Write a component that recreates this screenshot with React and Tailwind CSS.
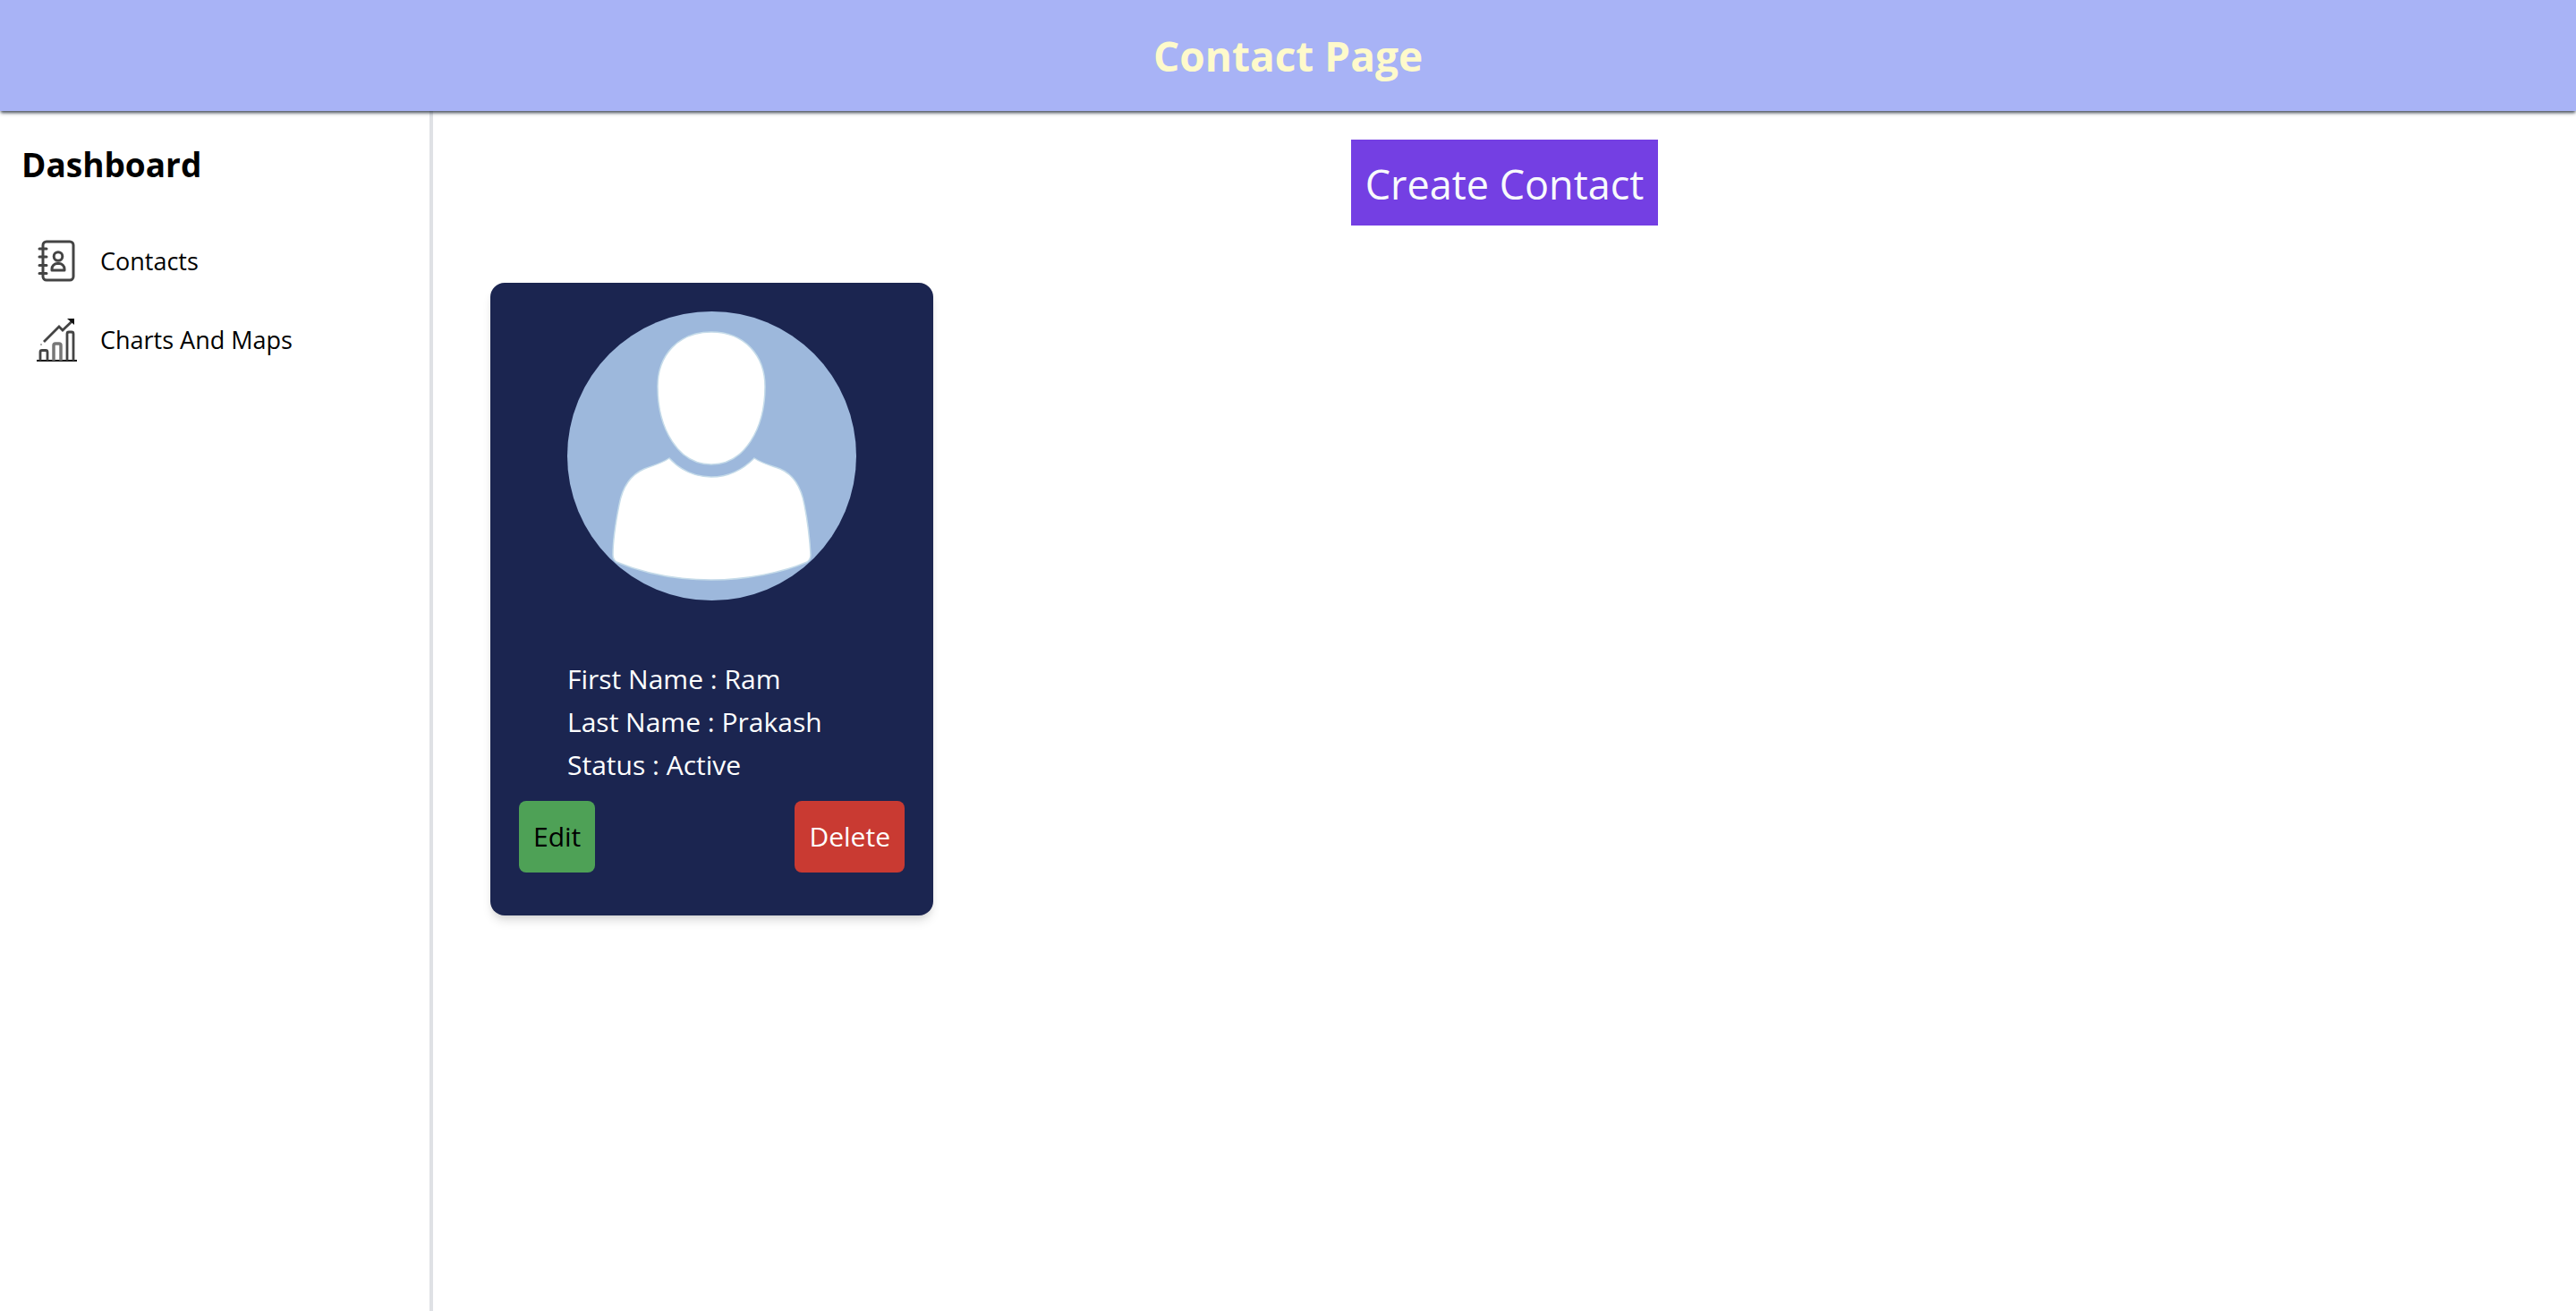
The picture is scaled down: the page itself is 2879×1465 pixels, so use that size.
const person = { first: "Ram", last: "Prakash", status: "Active" };

function ContactsIcon() {
  return (
    <svg className="size-12" viewBox="0 0 48 48" fill="none" stroke="#444" strokeWidth="3" strokeLinecap="round" aria-hidden="true">
      <rect x="8" y="2" width="34" height="43" rx="4" />
      <path d="M4 10h8M4 19h8M4 28.500h8M4 37.500h8" />
      <circle cx="25" cy="18.500" r="4.800" />
      <path d="M18 34v-1.500a6 6 0 0 1 6-6h2a6 6 0 0 1 6 6v1.500z" strokeLinejoin="round" />
    </svg>
  );
}

function ChartsIcon() {
  return (
    <svg className="size-12" viewBox="0 0 48 48" fill="none" stroke="#444" strokeWidth="2.800" aria-hidden="true">
      <path d="M1 47h45" stroke="#111" strokeWidth="2" />
      <path d="M5 47V37.500q0-2 2-2h4q2 0 2 2V47M35 47V17q0-2 2-2h3q2 0 2 2V47" />
      <path d="M20 47V30q0-2 2-2h4q2 0 2 2V47" stroke="#777" strokeWidth="3.500" />
      <path d="M9 26 26 9l4 4L41 2.500" />
      <path d="M35 0h8v7z" fill="#111" stroke="none" />
      <circle cx="6" cy="29" r="1" fill="#999" stroke="none" />
    </svg>
  );
}

function Avatar() {
  return (
    <svg className="size-[323px] rounded-full" viewBox="0 0 323 323" role="img" aria-label="Contact photo">
      <rect width="323" height="323" fill="#9db8dc" />
      <g fill="#fff" stroke="#c5dbe9" strokeWidth="1.500">
        <path d="M161 23C198 23 221 49 221 84C221 131 198 171 161 171C124 171 101 131 101 84C101 49 124 23 161 23Z" />
        <path d="M114 164C127 178 142 185 161 185C180 185 195 178 209 164C218 170 227 172 238 176C252 182 261 194 265 216C269 236 271 255 272 272Q272 277 268 280C240 292 200 300 161 300C122 300 84 292 55 280Q51 277 51 272C51 255 54 236 58 216C62 194 72 182 86 176C96 172 105 170 114 164Z" />
      </g>
    </svg>
  );
}

function NavLink({ icon, children }) {
  return (
    <a href="#" className="flex h-[88px] items-center gap-6 pl-4 text-[27px] leading-10">
      {icon}
      <span>{children}</span>
    </a>
  );
}

export default function App() {
  return (
    <div className="flex min-h-screen flex-col bg-white font-['Open_Sans',sans-serif] text-black">
      <header className="relative flex h-[124px] items-center justify-center bg-[#a8b3f6] shadow-[0_3px_3px_-1px_rgba(31,41,55,0.7),0_3px_5px_-1px_rgba(31,41,55,0.3)]">
        <h1 className="text-[46px] leading-[64px] font-bold text-[#fefacb]">Contact Page</h1>
      </header>
      <div className="flex grow">
        <aside className="w-[484px] shrink-0 border-r-4 border-[#dfe1e5] px-6 pt-8">
          <h2 className="text-[37px] leading-[56px] font-bold">Dashboard</h2>
          <nav className="mt-9">
            <NavLink icon={<ContactsIcon />}>Contacts</NavLink>
            <NavLink icon={<ChartsIcon />}>Charts And Maps</NavLink>
          </nav>
        </aside>
        <main className="grow px-16 pt-8">
          <div className="flex justify-center">
            <button type="button" className="bg-[#743fe3] px-4 pt-[18px] pb-[14px] text-[45px] leading-[64px] text-[#f8fafc]">Create Contact</button>
          </div>
          <section className="mt-16 w-fit rounded-2xl bg-[#1b2550] px-8 pt-8 pb-12 text-[30px] leading-[48px] text-white shadow-[0_8px_12px_-2px_rgba(0,0,0,0.12),0_4px_8px_-4px_rgba(0,0,0,0.12)]">
            <div className="px-[54px]">
              <Avatar />
              <div className="mt-16 whitespace-nowrap">
                <p>First Name : {person.first}</p>
                <p>Last Name : {person.last}</p>
                <p>Status : {person.status}</p>
              </div>
            </div>
            <div className="mt-4 flex justify-between">
              <button type="button" className="h-20 rounded-lg bg-[#4ea156] px-4 text-black">Edit</button>
              <button type="button" className="h-20 rounded-lg bg-[#c93a32] px-4">Delete</button>
            </div>
          </section>
        </main>
      </div>
    </div>
  );
}
